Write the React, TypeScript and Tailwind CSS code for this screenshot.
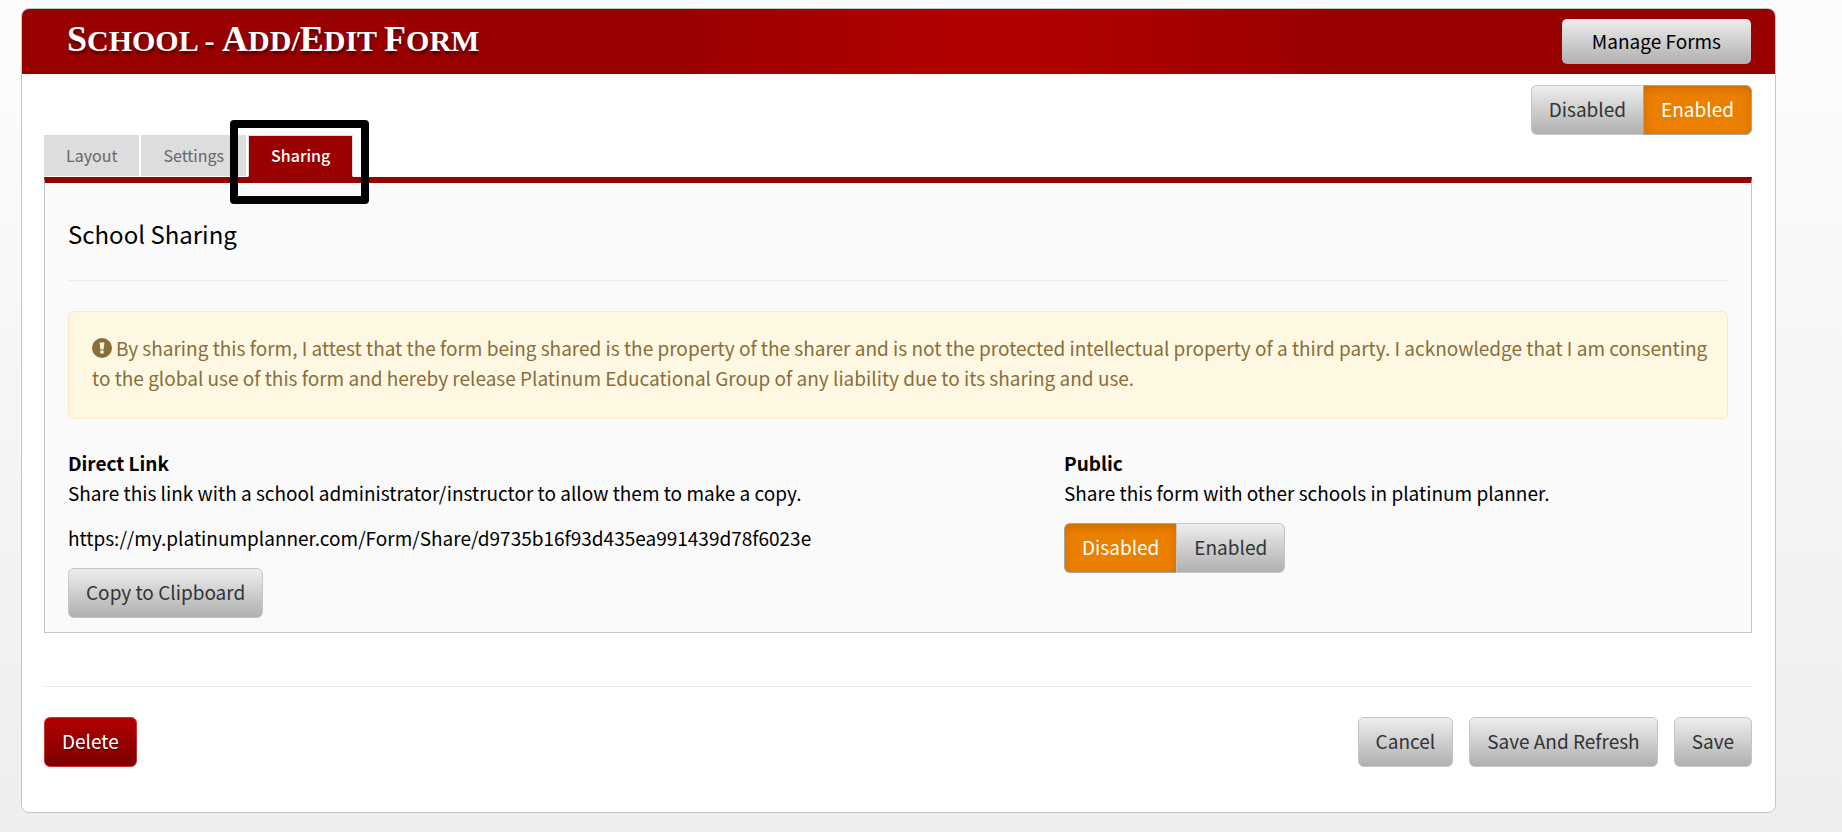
import { useState } from 'react';
import type { ReactNode } from 'react';

const SHARE_URL = 'https://my.platinumplanner.com/Form/Share/d9735b16f93d435ea991439d78f6023e';

const TABS = ['Layout', 'Settings', 'Sharing'];

function GrayButton({ children, onClick }: { children: ReactNode; onClick?: () => void }) {
  return (
    <button
      type="button"
      onClick={onClick}
      className="h-[50px] px-[17px] pb-0.5 rounded-md border border-[#c5c5c5] bg-linear-to-b from-[#eeeeee] to-[#b0b0b0] text-[#333333] whitespace-nowrap"
    >
      {children}
    </button>
  );
}

function Toggle({ label, enabled, onChange }: { label: string; enabled: boolean; onChange: (v: boolean) => void }) {
  const on = 'bg-[#eb7f00] border-[#a5a5a5] text-white shadow-[inset_0_3px_8px_rgba(0,0,0,0.15)]';
  const off = 'bg-linear-to-b from-[#eeeeee] to-[#b0b0b0] border-[#c5c5c5] text-[#333333]';
  return (
    <div role="group" aria-label={label} className="flex">
      <button
        type="button"
        aria-pressed={!enabled}
        onClick={() => onChange(false)}
        className={`h-[50px] px-[17px] pb-0.5 rounded-l-md border border-r-0 ${enabled ? off : on}`}
      >
        Disabled
      </button>
      <button
        type="button"
        aria-pressed={enabled}
        onClick={() => onChange(true)}
        className={`h-[50px] px-[17px] pb-0.5 rounded-r-md border ${enabled ? on : off}`}
      >
        Enabled
      </button>
    </div>
  );
}

function WarningIcon() {
  return (
    <svg viewBox="0 0 20 20" className="inline-block w-5 h-5 mr-1 -mt-1.5" aria-hidden="true">
      <circle cx="10" cy="10" r="10" fill="currentColor" />
      <path d="M7.6 4.6h4.8l-.8 6.8H8.4z" fill="#fef8e2" />
      <rect x="8.3" y="12.6" width="3.4" height="2.8" rx=".5" fill="#fef8e2" />
    </svg>
  );
}

export default function App() {
  const [activeTab, setActiveTab] = useState('Sharing');
  const [formEnabled, setFormEnabled] = useState(true);
  const [isPublic, setIsPublic] = useState(false);

  return (
    <div className="min-h-screen pt-2 pb-4 pl-[21px] pr-[66px] bg-linear-to-b from-[#fdfdfd] to-[#eeeeee] font-['Noto_Sans_CJK_SC',sans-serif] text-[19px] leading-[30px] text-black">
      <main className="rounded-lg border border-[#c5c5c5] bg-white overflow-hidden">
        <header className="h-[65px] flex items-center justify-between pl-[45px] pr-6 bg-[linear-gradient(to_right,#990000_37%,#b20000_53%,#b20000_58%,#990000_75%)]">
          <h1 className="pb-1 font-['Liberation_Serif',serif] font-bold text-[30px] leading-9 uppercase text-white [text-shadow:1px_3px_3px_rgba(0,0,0,0.5)]">
            <span className="text-[36px]">S</span>chool - <span className="text-[36px]">A</span>dd/
            <span className="text-[36px]">E</span>dit <span className="text-[36px]">F</span>orm
          </h1>
          <button
            type="button"
            className="h-[45px] px-[30px] pb-0.5 rounded-[5px] bg-linear-to-b from-[#eeeeee] to-[#b0b0b0] text-black"
          >
            Manage Forms
          </button>
        </header>

        <div className="pl-[22px] pr-[23px] pt-[11px] pb-[45px]">
          <div className="flex justify-end">
            <Toggle label="Form status" enabled={formEnabled} onChange={setFormEnabled} />
          </div>

          <div role="tablist" className="flex gap-0.5 text-base">
            {TABS.map(tab => (
              <div key={tab} className="relative">
                <button
                  type="button"
                  role="tab"
                  aria-selected={tab === activeTab}
                  onClick={() => setActiveTab(tab)}
                  className={`h-[42px] px-[22px] pb-0.5 ${
                    tab === activeTab
                      ? 'bg-[#990000] border border-[#dddddd] border-b-[#990000] text-white font-medium'
                      : 'bg-[#dddddd] border-b border-white text-[#666666]'
                  }`}
                >
                  {tab}
                </button>
                {tab === 'Sharing' && (
                  <div className="absolute -left-[18px] -right-4 -top-[15px] h-[84px] border-8 border-black rounded-sm pointer-events-none" />
                )}
              </div>
            ))}
          </div>

          <section className="border border-t-[6px] border-[#c5c5c5] border-t-[#990000] bg-[#fafafa] px-[23px] pb-[14px]">
            <h2 className="pt-[33px] pb-7 border-b border-[#ebebeb] text-2xl leading-9">School Sharing</h2>

            <p className="mt-[30px] pl-[23px] pr-3 pt-[21px] pb-[25px] border border-[#fbe8c8] rounded-md bg-[#fef8e2] text-[#8a6d3b]">
              <WarningIcon />
              By sharing this form, I attest that the form being shared is the property of the sharer and is not the
              protected intellectual property of a third party. I acknowledge that I am consenting to the global use of
              this form and hereby release Platinum Educational Group of any liability due to its sharing and use.
            </p>

            <div className="mt-[29px] grid grid-cols-[3fr_2fr] items-start">
              <div>
                <h3 className="font-bold">Direct Link</h3>
                <p>Share this link with a school administrator/instructor to allow them to make a copy.</p>
                <p className="my-[15px]">{SHARE_URL}</p>
                <GrayButton onClick={() => navigator.clipboard.writeText(SHARE_URL)}>Copy to Clipboard</GrayButton>
              </div>
              <div>
                <h3 className="font-bold">Public</h3>
                <p className="mb-[15px]">Share this form with other schools in platinum planner.</p>
                <Toggle label="Public sharing" enabled={isPublic} onChange={setIsPublic} />
              </div>
            </div>
          </section>

          <footer className="mt-[53px] pt-[30px] border-t border-[#ebebeb] flex items-center justify-between">
            <button
              type="button"
              className="h-[50px] px-[17px] pb-0.5 rounded-md border border-[#c93030] bg-linear-to-b from-[#b20000] to-[#7d0000] text-white [text-shadow:1px_1px_1px_rgba(0,0,0,0.5)]"
            >
              Delete
            </button>
            <div className="flex gap-4">
              <GrayButton>Cancel</GrayButton>
              <GrayButton>Save And Refresh</GrayButton>
              <GrayButton>Save</GrayButton>
            </div>
          </footer>
        </div>
      </main>
    </div>
  );
}
